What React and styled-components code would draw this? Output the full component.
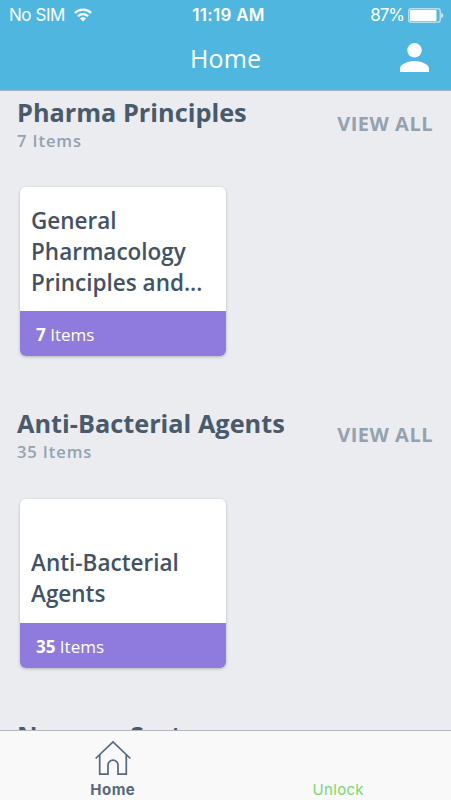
import React from "react"
import styled, { createGlobalStyle } from "styled-components"

const sections = [
  {
    title: "Pharma Principles",
    count: 7,
    card: ["General", "Pharmacology", "Principles and..."],
  },
  {
    title: "Anti-Bacterial Agents",
    count: 35,
    card: ["Anti-Bacterial", "Agents"],
  },
  { title: "Nervous System" },
]

function App() {
  return (
    <Screen>
      <GlobalStyle />
      <Header>
        <StatusBar>
          <Carrier>
            <span>No SIM</span>
            <WifiIcon />
          </Carrier>
          <Clock>11:19 AM</Clock>
          <Power>
            <span>87%</span>
            <BatteryIcon />
          </Power>
        </StatusBar>
        <NavBar>
          <NavTitle>Home</NavTitle>
          <ProfileButton aria-label="Profile">
            <ProfileIcon />
          </ProfileButton>
        </NavBar>
      </Header>
      <Content>
        {sections.map((section) => (
          <Section key={section.title}>
            <SectionHead>
              <div>
                <SectionTitle>{section.title}</SectionTitle>
                {section.count && (
                  <SectionCount>{section.count} Items</SectionCount>
                )}
              </div>
              {section.count && <ViewAll>VIEW ALL</ViewAll>}
            </SectionHead>
            {section.card && (
              <Card>
                <CardBody>
                  {section.card.map((line) => (
                    <CardLine key={line}>{line}</CardLine>
                  ))}
                </CardBody>
                <CardFooter>
                  <b>{section.count}</b> Items
                </CardFooter>
              </Card>
            )}
          </Section>
        ))}
      </Content>
      <TabBar>
        <Tab>
          <HomeIcon />
          <TabLabel $active>Home</TabLabel>
        </Tab>
        <Tab>
          <TabLabel>Unlock</TabLabel>
        </Tab>
      </TabBar>
    </Screen>
  )
}

const WifiIcon = () => (
  <svg width="18" height="14" viewBox="0 0 18 14" fill="none">
    <path d="M.9 5a11.5 11.5 0 0 1 16.2 0" stroke="#fff" strokeWidth="2.3" />
    <path d="M3.9 8.2a7.3 7.3 0 0 1 10.2 0" stroke="#fff" strokeWidth="2.1" />
    <path d="M9 13.6 5.9 10.5a4.4 4.4 0 0 1 6.2 0z" fill="#fff" />
  </svg>
)

const BatteryIcon = () => (
  <svg width="36" height="15" viewBox="0 0 36 15">
    <rect x="0.75" y="0.75" width="31.5" height="13.5" rx="2.5" fill="none" stroke="#b4e0f0" strokeWidth="1.5" />
    <rect x="2" y="2" width="26.5" height="11" rx="1" fill="#fff" />
    <path d="M33.3 5c1.3.3 1.9 1.2 1.9 2.5s-.6 2.2-1.9 2.5z" fill="#d4eef7" />
  </svg>
)

const ProfileIcon = () => (
  <svg width="29" height="29" viewBox="0 0 29 29" fill="#fff">
    <circle cx="14.5" cy="7.3" r="7.2" />
    <path d="M0 29v-3.6c0-4.8 9.6-7.4 14.5-7.4S29 20.6 29 25.4V29z" />
  </svg>
)

const HomeIcon = () => (
  <svg width="36" height="34" viewBox="0 0 36 34" fill="none" stroke="#56697f" strokeWidth="1.7">
    <path d="M.6 17.5 18 .9l17.4 16.6" />
    <path d="M4.7 13.7v19.4H13v-9a5 5 0 0 1 10 0v9h8.3V13.7" />
  </svg>
)

const GlobalStyle = createGlobalStyle`
  * {
    box-sizing: border-box;
  }
  body {
    margin: 0;
    background: #ebecf0;
    font-family: "Open Sans", "Noto Sans", sans-serif;
  }
  svg {
    display: block;
    flex: none;
  }
`

const Screen = styled.div`
  height: 800px;
  overflow: hidden;
  display: flex;
  flex-direction: column;
`

const Header = styled.header`
  flex: none;
  height: 91px;
  background: #4fb7df;
  border-bottom: 1px solid #a3b2cd;
  color: #fff;
`

const StatusBar = styled.div`
  display: grid;
  grid-template-columns: 1fr auto 1fr;
  align-items: center;
  height: 29px;
  padding: 0 7px 0 9px;
  font-family: Inter, sans-serif;
  font-size: 17px;
  line-height: 30px;
`

const Carrier = styled.div`
  display: flex;
  align-items: center;
  gap: 9px;
  letter-spacing: -0.45px;
`

const Clock = styled.div`
  padding-left: 4px;
  font-weight: 600;
  letter-spacing: 0.3px;
`

const Power = styled.div`
  display: flex;
  align-items: center;
  justify-content: flex-end;
  gap: 4px;
  letter-spacing: -1px;
`

const NavBar = styled.div`
  display: grid;
  grid-template-columns: 1fr auto 1fr;
  align-items: center;
  height: 59px;
  padding: 0 22px;
`

const NavTitle = styled.h1`
  grid-column: 2;
  margin: 0;
  font-size: 25px;
  font-weight: 400;
  line-height: 59px;
  letter-spacing: 0.1px;
`

const ProfileButton = styled.button`
  justify-self: end;
  padding: 0 0 2px;
  border: 0;
  background: none;
  cursor: pointer;
`

const Content = styled.main`
  flex: 1;
  min-height: 0;
  overflow: hidden;
`

const Section = styled.section`
  height: 311.4px;
  padding: 5px 18px 0 17px;
`

const SectionHead = styled.div`
  display: flex;
  justify-content: space-between;
  align-items: flex-start;
  height: 56px;
`

const SectionTitle = styled.h2`
  margin: 0;
  color: #495a6b;
  font-size: 25.3px;
  font-weight: 700;
  line-height: 32px;
`

const SectionCount = styled.div`
  color: #94a2ae;
  font-size: 16.5px;
  font-weight: 600;
  line-height: 26px;
  letter-spacing: 0.9px;
`

const ViewAll = styled.a`
  color: #94a2ae;
  font-size: 20px;
  font-weight: 700;
  line-height: 55px;
  letter-spacing: 0.5px;
`

const Card = styled.article`
  width: 206px;
  margin: 35.2px 0 0 3px;
  border-radius: 6px;
  box-shadow: 0 1px 3px rgba(70, 80, 80, 0.35);
  overflow: hidden;
`

const CardBody = styled.div`
  display: flex;
  flex-direction: column;
  justify-content: flex-end;
  height: 124px;
  padding: 0 11px 13px;
  background: #fff;
`

const CardLine = styled.div`
  color: #435365;
  font-size: 22.5px;
  font-weight: 600;
  line-height: 30.6px;
  white-space: nowrap;
`

const CardFooter = styled.div`
  height: 45px;
  padding-left: 16px;
  background: #8e7bdd;
  color: #fff;
  font-size: 17px;
  line-height: 47px;
`

const TabBar = styled.nav`
  flex: none;
  display: flex;
  height: 70px;
  background: #f9f9f9;
  border-top: 1px solid #b5b7c0;
`

const Tab = styled.div`
  flex: 1;
  display: flex;
  flex-direction: column;
  align-items: center;
  justify-content: flex-end;
  gap: 4px;
`

const TabLabel = styled.span`
  color: ${(props) => (props.$active ? "#56697f" : "#7bd672")};
  font-family: Inter, sans-serif;
  font-size: 15px;
  font-weight: ${(props) => (props.$active ? 700 : 400)};
  line-height: 21px;
  letter-spacing: ${(props) => (props.$active ? "0.5px" : "0.3px")};
`

export default App
